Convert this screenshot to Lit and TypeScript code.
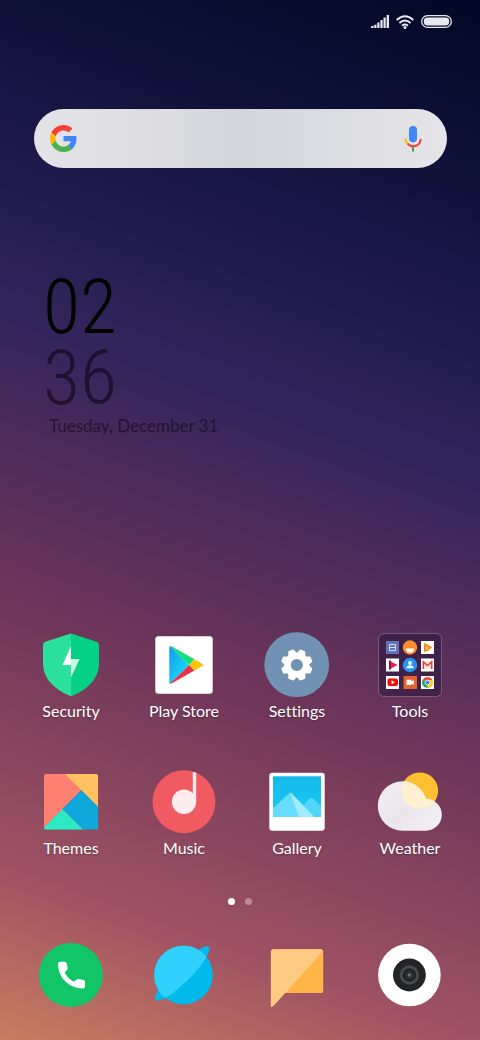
import { LitElement, html, css, svg } from "lit";
import { customElement } from "lit/decorators.js";

const frame = (content: unknown) => html`
  <svg class="art" viewBox="0 0 68 68" aria-hidden="true">${content}</svg>
`;

const security = frame(svg`
  <path fill="#2be09a" d="M34 2.5 9 10.6Q6 11.6 6 14.5V32C6 48 18 59 34 65.3Z" />
  <path fill="#04d183" d="M34 2.5 59 10.6Q62 11.6 62 14.5V32C62 48 50 59 34 65.3Z" />
  <path fill="#fff" d="M34 15 25.4 34H34Z" />
  <path fill="#c9f7e4" d="M34 28H42.6L34 46.4Z" />
`);

const playStore = frame(svg`
  <defs>
    <linearGradient id="play-blue" x1="0" y1="0" x2="1" y2="1">
      <stop offset="0" stop-color="#1796ee" />
      <stop offset="0.6" stop-color="#12cdf5" />
      <stop offset="1" stop-color="#17dcfb" />
    </linearGradient>
  </defs>
  <rect x="5.3" y="5.3" width="57.4" height="57.4" rx="3" fill="#fff" />
  <path fill="url(#play-blue)" d="M19.3 16.5Q19.3 15 20.5 15.6L39.3 34 20.5 52.3Q19.3 52.8 19.3 51.4Z" />
  <path fill="#16e07c" d="M20 15.2Q20.8 14.8 22 15.4L44.4 28.2 39.3 34Z" />
  <path fill="#ee3248" d="M20 52.6Q20.8 53 22 52.3L44.4 39.6 39.3 34Z" />
  <path fill="#fdc50c" d="M44.4 28.2 52.6 33Q54 33.9 52.6 34.9L44.4 39.6 39.3 34Z" />
`);

const toothAngles = [22.5, 67.5, 112.5, 157.5, 202.5, 247.5, 292.5, 337.5];
const settings = frame(svg`
  <circle cx="33.7" cy="33.7" r="32.4" fill="#7192b2" />
  <g fill="#fff">
    ${toothAngles.map(
      (angle) => svg`<path transform="rotate(${angle} 33.8 34)" d="M29 24 30.6 19.2Q31 18.2 32 18.2H35.6Q36.6 18.2 37 19.2L38.6 24Z" />`
    )}
    <circle cx="33.8" cy="34" r="12.6" />
  </g>
  <circle cx="33.8" cy="34" r="6.1" fill="#7192b2" />
`);

const tools = frame(svg`
  <rect x="2.5" y="2.5" width="63" height="63" rx="5.5" fill="#28163c" fill-opacity=".55" stroke="#fff" stroke-opacity=".24" />
  <rect x="10" y="10" width="13" height="13" fill="#6273b3" />
  <path fill="none" stroke="#d5dcf3" d="M13.5 13.5h6v6h-6zM13 16.5h7" />
  <circle cx="34" cy="16.5" r="7.2" fill="#f98f2c" />
  <path fill="#fff" d="M29.8 17.5h8.4a4.2 4.2 0 0 1-8.4 0Z" />
  <rect x="45" y="10" width="13" height="13" fill="#fff" />
  <path fill="#fba20d" d="M48 11.5 56.5 16.5 48 21.5Z" />
  <circle cx="50.8" cy="17" r="2.5" fill="#fdc938" stroke="#f2633a" />
  <rect x="10" y="27.5" width="13" height="13" fill="#fff" />
  <path fill="#e31d57" d="M13 29.5 21.5 34 13 38.5Z" />
  <path fill="#9e1145" d="M13 29.5h2v9h-2Z" />
  <circle cx="34" cy="34" r="7.2" fill="#2794f3" />
  <circle cx="34" cy="32" r="1.9" fill="#fff" />
  <path fill="#fff" d="M30.3 37.3q0-2.3 3-2.7h1.4q3 .4 3 2.7Z" />
  <rect x="45" y="27.5" width="13" height="13" fill="#fff" />
  <path fill="#ece7e7" d="M47 30h9v8h-9Z" />
  <path fill="none" stroke="#e0463b" stroke-width="1.6" d="M47.3 38v-7.3l4.2 3.8 4.2-3.8V38" />
  <rect x="10" y="45" width="13" height="13" fill="#fff" />
  <rect x="11.5" y="47.5" width="10.5" height="7.5" rx="2" fill="#f80808" />
  <path fill="#fff" d="M15.6 49.3 18.8 51.3 15.6 53.2Z" />
  <rect x="27.5" y="45" width="13.5" height="13" fill="#e5652c" />
  <path fill="#fff" d="M30.5 48.8h5v1.6l2.3-1.4v4.8l-2.3-1.4v1.6h-5Z" />
  <rect x="45" y="45" width="13" height="13" fill="#fff" />
  <path fill="#e8453a" d="M51.5 51.5 46.7 48.6A5.6 5.6 0 0 1 56.5 49Z" />
  <path fill="#fccb1c" d="M51.5 51.5V57.1A5.6 5.6 0 0 0 56.5 49H51.5Z" />
  <path fill="#22a45c" d="M51.5 51.5V57.1A5.6 5.6 0 0 1 46.7 48.6Z" />
  <circle cx="51.5" cy="51.5" r="2.4" fill="#4284f3" stroke="#fff" stroke-width=".8" />
`);

const themes = frame(svg`
  <defs><clipPath id="themes-tile"><rect x="7" y="6" width="54.3" height="55.8" rx="2.6" /></clipPath></defs>
  <g clip-path="url(#themes-tile)">
    <path fill="#ff7f70" d="M7 6H28L44.3 22.3 7 59.6Z" />
    <path fill="#ffc162" d="M27.7 6H61.3V39.3Z" />
    <path fill="#10a7db" d="M44.3 22.2 61.3 39.2V61.8H46.5L25.4 41Z" />
    <path fill="#2beac4" d="M25.4 41 46.3 61.8H7V59.4Z" />
  </g>
`);

const music = frame(svg`
  <circle cx="34" cy="33.7" r="31.5" fill="#f25a61" />
  <circle cx="34" cy="33.8" r="12.2" fill="#fdecee" />
  <path fill="#fdecee" d="M42.8 4Q44.6 4 46.2 4.8V34H42.8Z" />
`);

const gallery = frame(svg`
  <defs>
    <linearGradient id="gallery-sky" x1="0" y1="0" x2="0" y2="1">
      <stop offset="0" stop-color="#14b8e9" />
      <stop offset="1" stop-color="#1cccf6" />
    </linearGradient>
  </defs>
  <rect x="6.3" y="4.7" width="55.4" height="58" rx="3" fill="#fff" />
  <rect x="10" y="8.3" width="48" height="40.7" fill="url(#gallery-sky)" />
  <path fill="#4fd6fa" d="M30 49 46.5 30.5Q48.3 28.8 50 30.5L58 38.3V49Z" />
  <path fill="#67dcfb" d="M10 40.5 25.8 25.6Q27.3 24.2 28.8 25.6L38 49H10Z" />
  <path fill="#a0ebfd" d="M27.3 24.8Q28.2 24.9 28.8 25.6L51.5 49H36Z" />
`);

const weather = frame(svg`
  <defs>
    <clipPath id="weather-cloud">
      <path d="M26.5 13.3A24.6 24.6 0 0 1 49.9 30.7 16 16 0 0 1 49.7 62.7H26.5A24.7 24.7 0 0 1 26.5 13.3Z" />
    </clipPath>
    <linearGradient id="weather-mist" x1="0" y1="0" x2="1" y2="1">
      <stop offset="0" stop-color="#f4eff2" />
      <stop offset=".55" stop-color="#ebe6ec" />
      <stop offset="1" stop-color="#f6f3f5" />
    </linearGradient>
  </defs>
  <circle cx="43.8" cy="22.7" r="18.3" fill="#fbbf2f" />
  <g clip-path="url(#weather-cloud)">
    <rect width="68" height="68" fill="url(#weather-mist)" />
    <circle cx="43.8" cy="22.7" r="18.3" fill="#fdf1d2" />
  </g>
`);

const phone = frame(svg`
  <circle cx="33.8" cy="34" r="32" fill="#12c668" />
  <path fill="#fff" d="M23 20.7H27.8Q29.3 20.7 29.6 22.2L30.6 26.8Q30.9 28 30 29L27.6 31.6Q30.5 37.5 36.9 40.8L39.7 38.5Q40.6 37.7 41.8 38L46.6 38.9Q48 39.2 48 40.7V45.4Q48 47.4 46 47.4C32 47.4 21 36.5 21 22.7Q21 20.7 23 20.7Z" />
`);

const browser = frame(svg`
  <defs>
    <clipPath id="browser-globe"><circle cx="33.5" cy="34" r="29.3" /></clipPath>
  </defs>
  <circle cx="33.5" cy="34" r="29.3" fill="#02b9ec" />
  <ellipse cx="32.2" cy="32.5" rx="37.6" ry="8.5" transform="rotate(-45 32.2 32.5)" fill="#02b9ec" />
  <g clip-path="url(#browser-globe)" fill="#31d1fd">
    <path d="M-2 67 67-2H-2Z" />
    <ellipse cx="32.2" cy="32.5" rx="37.6" ry="8.5" transform="rotate(-45 32.2 32.5)" />
  </g>
`);

const messages = frame(svg`
  <path fill="#ffb548" d="M10 8.3H57.6Q60.2 8.3 60.2 10.8V49.4Q60.2 52 57.6 52H22.4L10 40Z" />
  <path fill="#ffcb82" d="M10.3 8.3H57.6Q59.6 8.3 60 10.2L22.4 52 10 65.3Q7.8 67 7.8 64.8V10.8Q7.8 8.3 10.3 8.3Z" />
`);

const camera = frame(svg`
  <circle cx="33.4" cy="34" r="31.3" fill="#fff" />
  <circle cx="33.4" cy="34" r="16.4" fill="#222527" />
  <circle cx="33.4" cy="34" r="8.2" fill="#1e2022" stroke="#48494c" stroke-width="3" />
  <circle cx="33.4" cy="34" r="4.5" fill="#2b2d2f" />
  <circle cx="33.4" cy="34" r="1.8" fill="#66686b" />
`);

const apps = [
  { name: "Security", icon: security },
  { name: "Play Store", icon: playStore },
  { name: "Settings", icon: settings },
  { name: "Tools", icon: tools },
  { name: "Themes", icon: themes },
  { name: "Music", icon: music },
  { name: "Gallery", icon: gallery },
  { name: "Weather", icon: weather },
];

const dock = [
  { name: "Phone", icon: phone },
  { name: "Browser", icon: browser },
  { name: "Messages", icon: messages },
  { name: "Camera", icon: camera },
];

@customElement("app-root")
export class AppRoot extends LitElement {
  static styles = css`
    :host {
      display: block;
      font-family: Lato, "Open Sans", sans-serif;
      font-variant-ligatures: none;
      color: #fff;
    }
    .screen {
      box-sizing: border-box;
      min-height: 100vh;
      display: flex;
      flex-direction: column;
      padding-bottom: 31px;
      background: linear-gradient(
        200deg,
        #010826 0%,
        #0e1138 14%,
        #1b1848 25%,
        #32255b 40%,
        #4c2b5a 50%,
        #6f3659 64%,
        #9f5363 86%,
        #c87d60 100%
      );
    }
    button {
      border: 0;
      padding: 0;
      background: none;
      color: inherit;
      font: inherit;
      cursor: pointer;
    }
    .status {
      display: flex;
      justify-content: flex-end;
      align-items: center;
      gap: 7px;
      height: 43px;
      padding-right: 28px;
    }
    .status svg {
      display: block;
    }
    .search {
      display: flex;
      align-items: center;
      height: 59px;
      box-sizing: border-box;
      margin: 66px 33px 0 34px;
      padding: 0 25px 0 16px;
      border-radius: 30px;
      background: linear-gradient(90deg, #e4e3e8, #d5d6db 50%, #e4e4e9);
    }
    .search svg {
      display: block;
      flex: none;
    }
    .query {
      flex: 1;
      min-width: 0;
      height: 40px;
      margin: 0 12px;
      border: 0;
      outline: 0;
      background: none;
      color: #202124;
      font: 18px Lato, sans-serif;
    }
    .clock {
      display: flex;
      flex-direction: column;
      margin: 104px 0 0 43px;
      color: #000;
    }
    .digits {
      font: 300 76px/71px "Roboto Condensed", Roboto, sans-serif;
    }
    .faded {
      color: rgba(14, 4, 22, 0.6);
    }
    .date {
      padding-left: 6px;
      font-size: 17px;
      line-height: 24px;
    }
    .apps,
    .dock {
      display: grid;
      grid-template-columns: repeat(4, 68px);
      justify-content: space-between;
      row-gap: 45px;
      padding: 0 36px 0 37px;
    }
    .apps {
      margin-top: auto;
    }
    .app {
      display: flex;
      flex-direction: column;
      align-items: center;
    }
    .art {
      display: block;
      width: 68px;
      height: 68px;
    }
    .label {
      font-size: 16px;
      line-height: 24px;
      white-space: nowrap;
      text-shadow: 0 1px 2px rgba(0, 0, 0, 0.3);
    }
    .pages {
      display: flex;
      justify-content: center;
      gap: 10px;
      margin: 38px 0 36px;
    }
    .page {
      width: 7px;
      height: 7px;
      border-radius: 50%;
      background: #fff;
      opacity: 0.35;
    }
    .current {
      opacity: 1;
    }
  `;

  render() {
    return html`
      <main class="screen">
        <header class="status">
          <svg width="18" height="13" viewBox="0 0 18 13" fill="#e8e9ee" role="img" aria-label="Signal">
            <path d="M0 13v-1.6l2.6-.9V13zM3.3 13V9.7h2.2V13zM6.3 13V7.4h2.2V13zM9.4 13V5h2.2v8zM12.5 13V2.4h2.2V13zM15.6 13V0H18v13z" />
          </svg>
          <svg width="18" height="14" viewBox="0 0 18 14" fill="none" stroke="#e8e9ee" stroke-width="2" role="img" aria-label="Wi-Fi">
            <path d="M.7 5Q9-2.6 17.3 5M3.4 8Q9 3 14.6 8M6 10.7Q9 8.3 12 10.7" />
            <circle cx="9" cy="12.4" r="1.5" fill="#e8e9ee" stroke="none" />
          </svg>
          <svg width="31" height="13" viewBox="0 0 31 13" role="img" aria-label="Battery full">
            <rect x=".7" y=".7" width="29.6" height="11.6" rx="5.8" fill="none" stroke="#e8e9ee" stroke-width="1.3" />
            <rect x="2.8" y="2.6" width="25.4" height="7.8" rx="3.6" fill="#e8e9ee" />
          </svg>
        </header>

        <form class="search" role="search" @submit=${(e: Event) => e.preventDefault()}>
          <svg width="27" height="27" viewBox="1 1 22 22" aria-hidden="true">
            <path fill="#4285f4" d="M22.56 12.25c0-.78-.07-1.53-.2-2.25H12v4.26h5.92c-.26 1.37-1.04 2.53-2.21 3.31v2.77h3.57c2.08-1.92 3.28-4.74 3.28-8.09z" />
            <path fill="#4caf50" d="M12 23c2.97 0 5.46-.98 7.28-2.66l-3.57-2.77c-.98.66-2.23 1.06-3.71 1.06-2.86 0-5.29-1.93-6.16-4.53H2.18v2.84C3.99 20.53 7.7 23 12 23z" />
            <path fill="#fbbc05" d="M5.84 14.09c-.22-.66-.35-1.36-.35-2.09s.13-1.43.35-2.09V7.07H2.18C1.43 8.55 1 10.22 1 12s.43 3.45 1.18 4.93l2.85-2.22.81-.62z" />
            <path fill="#f44336" d="M12 5.38c1.62 0 3.06.56 4.21 1.64l3.15-3.15C17.45 2.09 14.97 1 12 1 7.7 1 3.99 3.47 2.18 7.07l3.66 2.84c.87-2.6 3.3-4.53 6.16-4.53z" />
          </svg>
          <input class="query" type="text" aria-label="Search" />
          <button type="button" aria-label="Voice search">
            <svg width="18" height="26" viewBox="0 0 18 26" fill="none">
              <rect x="5" y="0" width="8" height="16.4" rx="3.8" fill="#4285f4" />
              <path stroke="#34a853" stroke-width="2" d="M9 21v4.4" />
              <path stroke="#fbbc05" stroke-width="2" d="M1.3 12.8Q1.6 16 3.8 18" />
              <path stroke="#f44336" stroke-width="2" d="M3.6 17.8Q5.8 20.2 9 20.2 16 20 16.7 12.8" />
            </svg>
          </button>
        </form>

        <section class="clock">
          <span class="digits">02</span>
          <span class="digits faded">36</span>
          <span class="date faded">Tuesday, December 31</span>
        </section>

        <section class="apps">
          ${apps.map(
            (app) => html`
              <button class="app" type="button">
                ${app.icon}
                <span class="label">${app.name}</span>
              </button>
            `
          )}
        </section>

        <div class="pages" aria-hidden="true">
          <span class="page current"></span>
          <span class="page"></span>
        </div>

        <nav class="dock">
          ${dock.map((app) => html`<button class="app" type="button" aria-label=${app.name}>${app.icon}</button>`)}
        </nav>
      </main>
    `;
  }
}
